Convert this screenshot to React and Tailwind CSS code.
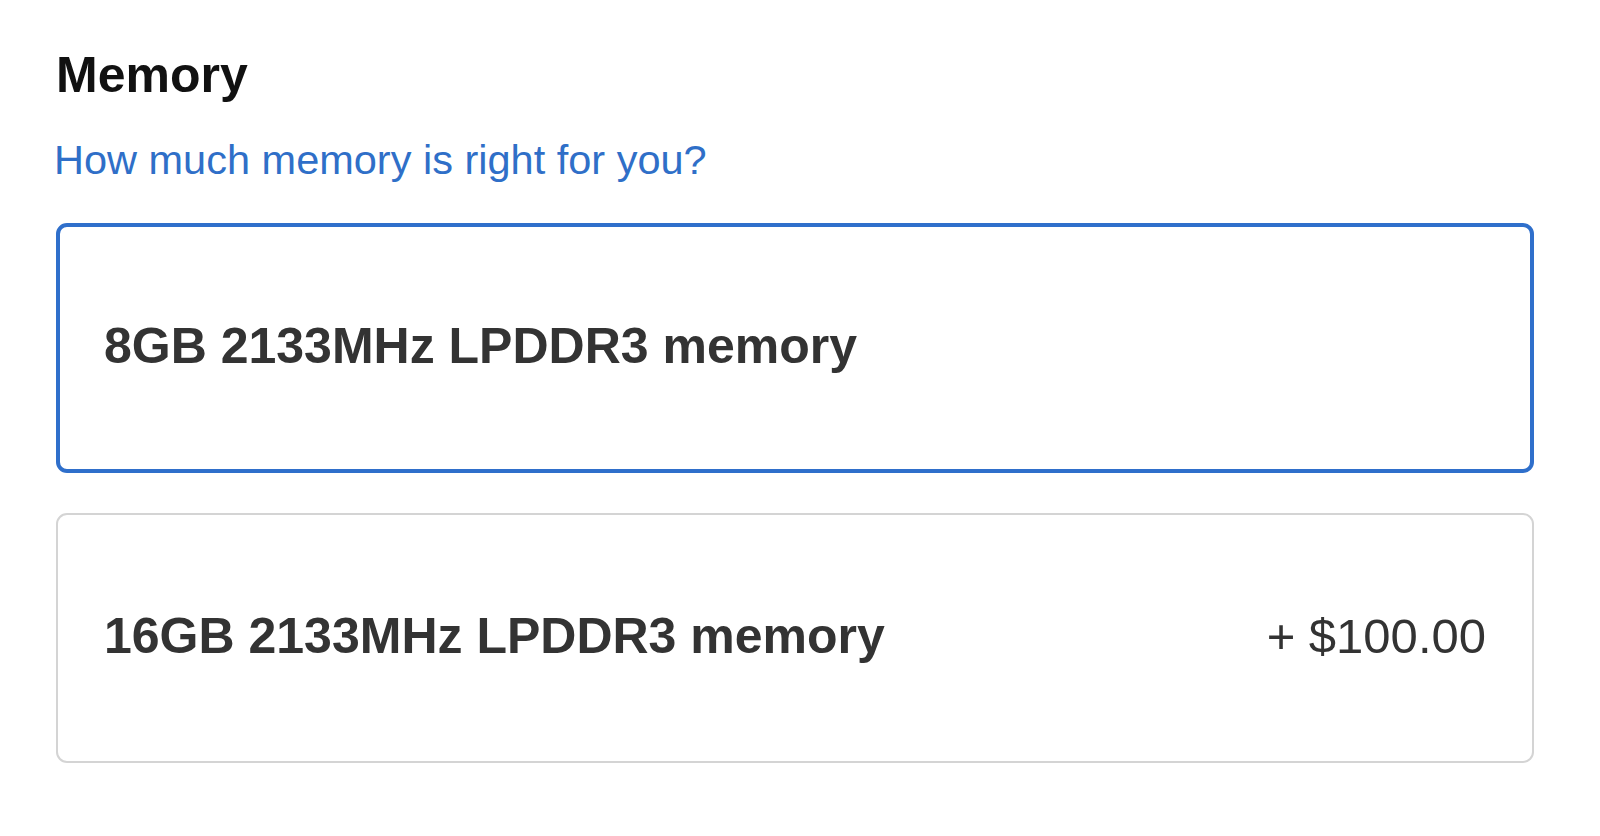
export default function App() {
  return (
    <div
      className="w-[1600px] h-[836px] bg-white pl-[56px] pr-[66px] pt-[50px]"
      style={{ fontFamily: '"Liberation Sans", Arial, sans-serif' }}
    >
      <h2 className="text-[50px] leading-[50px] font-bold text-[#111111]">Memory</h2>
      <a className="block mt-[39px] -ml-[2px] text-[41.5px] leading-[41px] text-[#2f6fc8]" href="#">
        How much memory is right for you?
      </a>
      <div className="mt-[43px] flex flex-col gap-[40px]">
        <div className="h-[250px] rounded-[11px] border-4 border-[#2f6fcb] flex items-center justify-between px-[44px] pb-[4px]">
          <span className="text-[50px] leading-[50px] font-bold text-[#333333]">8GB 2133MHz LPDDR3 memory</span>
        </div>
        <div className="h-[250px] rounded-[11px] border-2 border-[#d4d4d4] flex items-center justify-between px-[46px] pb-[4px]">
          <span className="text-[50px] leading-[50px] font-bold text-[#333333]">16GB 2133MHz LPDDR3 memory</span>
          <span className="text-[49px] leading-[50px] text-[#333333]">+ $100.00</span>
        </div>
      </div>
    </div>
  );
}
